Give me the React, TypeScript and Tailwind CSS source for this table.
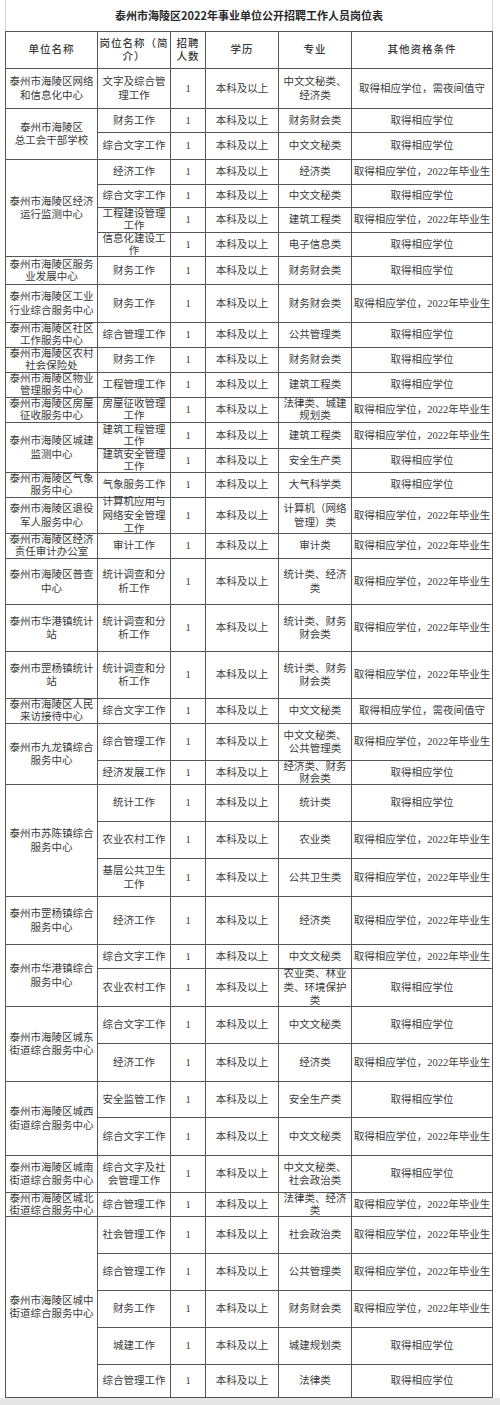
import React from "react";

type Row = [string, string, string];
type Group = { u: string; rows: Row[] };

const groups: Group[] = [
  { u: "泰州市海陵区网络\n和信息化中心", rows: [["文字及综合管\n理工作", "中文文秘类、\n经济类", "取得相应学位，需夜间值守"]] },
  { u: "泰州市海陵区\n总工会干部学校", rows: [["财务工作", "财务财会类", "取得相应学位"], ["综合文字工作", "中文文秘类", "取得相应学位"]] },
  {
    u: "泰州市海陵区经济\n运行监测中心",
    rows: [
      ["经济工作", "经济类", "取得相应学位，2022年毕业生"],
      ["综合文字工作", "中文文秘类", "取得相应学位"],
      ["工程建设管理\n工作", "建筑工程类", "取得相应学位，2022年毕业生"],
      ["信息化建设工\n作", "电子信息类", "取得相应学位"],
    ],
  },
  { u: "泰州市海陵区服务\n业发展中心", rows: [["财务工作", "财务财会类", "取得相应学位"]] },
  { u: "泰州市海陵区工业\n行业综合服务中心", rows: [["财务工作", "财务财会类", "取得相应学位，2022年毕业生"]] },
  { u: "泰州市海陵区社区\n工作服务中心", rows: [["综合管理工作", "公共管理类", "取得相应学位"]] },
  { u: "泰州市海陵区农村\n社会保险处", rows: [["财务工作", "财务财会类", "取得相应学位"]] },
  { u: "泰州市海陵区物业\n管理服务中心", rows: [["工程管理工作", "建筑工程类", "取得相应学位"]] },
  { u: "泰州市海陵区房屋\n征收服务中心", rows: [["房屋征收管理\n工作", "法律类、城建\n规划类", "取得相应学位，2022年毕业生"]] },
  {
    u: "泰州市海陵区城建\n监测中心",
    rows: [
      ["建筑工程管理\n工作", "建筑工程类", "取得相应学位，2022年毕业生"],
      ["建筑安全管理\n工作", "安全生产类", "取得相应学位"],
    ],
  },
  { u: "泰州市海陵区气象\n服务中心", rows: [["气象服务工作", "大气科学类", "取得相应学位"]] },
  { u: "泰州市海陵区退役\n军人服务中心", rows: [["计算机应用与\n网络安全管理\n工作", "计算机（网络\n管理）类", "取得相应学位，2022年毕业生"]] },
  { u: "泰州市海陵区经济\n责任审计办公室", rows: [["审计工作", "审计类", "取得相应学位，2022年毕业生"]] },
  { u: "泰州市海陵区普查\n中心", rows: [["统计调查和分\n析工作", "统计类、经济\n类", "取得相应学位，2022年毕业生"]] },
  { u: "泰州市华港镇统计\n站", rows: [["统计调查和分\n析工作", "统计类、财务\n财会类", "取得相应学位，2022年毕业生"]] },
  { u: "泰州市罡杨镇统计\n站", rows: [["统计调查和分\n析工作", "统计类、财务\n财会类", "取得相应学位，2022年毕业生"]] },
  { u: "泰州市海陵区人民\n来访接待中心", rows: [["综合文字工作", "中文文秘类", "取得相应学位，需夜间值守"]] },
  {
    u: "泰州市九龙镇综合\n服务中心",
    rows: [
      ["综合管理工作", "中文文秘类、\n公共管理类", "取得相应学位，2022年毕业生"],
      ["经济发展工作", "经济类、财务\n财会类", "取得相应学位"],
    ],
  },
  {
    u: "泰州市苏陈镇综合\n服务中心",
    rows: [
      ["统计工作", "统计类", "取得相应学位"],
      ["农业农村工作", "农业类", "取得相应学位，2022年毕业生"],
      ["基层公共卫生\n工作", "公共卫生类", "取得相应学位，2022年毕业生"],
    ],
  },
  { u: "泰州市罡杨镇综合\n服务中心", rows: [["经济工作", "经济类", "取得相应学位，2022年毕业生"]] },
  {
    u: "泰州市华港镇综合\n服务中心",
    rows: [
      ["综合文字工作", "中文文秘类", "取得相应学位，2022年毕业生"],
      ["农业农村工作", "农业类、林业\n类、环境保护\n类", "取得相应学位"],
    ],
  },
  {
    u: "泰州市海陵区城东\n街道综合服务中心",
    rows: [
      ["综合文字工作", "中文文秘类", "取得相应学位"],
      ["经济工作", "经济类", "取得相应学位，2022年毕业生"],
    ],
  },
  {
    u: "泰州市海陵区城西\n街道综合服务中心",
    rows: [
      ["安全监管工作", "安全生产类", "取得相应学位"],
      ["综合文字工作", "中文文秘类", "取得相应学位，2022年毕业生"],
    ],
  },
  { u: "泰州市海陵区城南\n街道综合服务中心", rows: [["综合文字及社\n会管理工作", "中文文秘类、\n社会政治类", "取得相应学位"]] },
  { u: "泰州市海陵区城北\n街道综合服务中心", rows: [["综合管理工作", "法律类、经济\n类", "取得相应学位，2022年毕业生"]] },
  {
    u: "泰州市海陵区城中\n街道综合服务中心",
    rows: [
      ["社会管理工作", "社会政治类", "取得相应学位，2022年毕业生"],
      ["综合管理工作", "公共管理类", "取得相应学位，2022年毕业生"],
      ["财务工作", "财务财会类", "取得相应学位，2022年毕业生"],
      ["城建工作", "城建规划类", "取得相应学位"],
      ["综合管理工作", "法律类", "取得相应学位"],
    ],
  },
];

const heights = [
  40, 24, 27, 25, 23, 25, 24, 28, 38, 25, 25, 25, 25, 26, 24, 25, 36, 25, 46, 47, 47, 25, 37, 24, 37, 37, 38, 48, 24,
  38, 37, 38, 36, 38, 37, 24, 37, 37, 37, 37, 33,
];

const spanClass: Record<number, string> = {
  1: "",
  2: "row-span-2",
  3: "row-span-3",
  4: "row-span-4",
  5: "row-span-5",
};

const FONT = { fontFamily: '"Liberation Serif", "Noto Sans CJK SC", serif' };

function Cell({ text, h, extra = "", nowrap = false }: { text: string; h: number; extra?: string; nowrap?: boolean }) {
  const lead = h < 30 ? "leading-[12px]" : "leading-[13.5px]";
  return (
    <div
      className={`flex flex-col items-center justify-center border-r border-b border-[#555] text-center ${lead} ${extra} ${
        nowrap ? "whitespace-nowrap" : ""
      }`}
    >
      {text.split("\n").map((l, i) => (
        <span key={i} className="block">
          {l}
        </span>
      ))}
    </div>
  );
}

export default function App() {
  const cells: React.ReactNode[] = [];
  let ri = 0;
  groups.forEach((g, gi) => {
    const n = g.rows.length;
    const total = heights.slice(ri, ri + n).reduce((a, b) => a + b, 0);
    cells.push(<Cell key={`u${gi}`} text={g.u} h={total} extra={spanClass[n]} />);
    g.rows.forEach((r, k) => {
      const h = heights[ri + k];
      cells.push(<Cell key={`p${gi}-${k}`} text={r[0]} h={h} />);
      cells.push(<Cell key={`n${gi}-${k}`} text="1" h={h} />);
      cells.push(<Cell key={`e${gi}-${k}`} text="本科及以上" h={h} />);
      cells.push(<Cell key={`m${gi}-${k}`} text={r[1]} h={h} />);
      cells.push(<Cell key={`o${gi}-${k}`} text={r[2]} h={h} nowrap />);
    });
    ri += n;
  });

  return (
    <div className="w-[500px] bg-white text-[#3a3a3a]" style={FONT}>
      <div className="pl-[5px] pr-[7px]">
        <div
          className="flex h-[31px] items-center justify-center border-x border-[#d4d4d4] text-[11px] font-bold text-[#2a2a2a]"
          style={{ fontFamily: '"Noto Sans CJK SC", sans-serif' }}
        >
          泰州市海陵区2022年事业单位公开招聘工作人员岗位表
        </div>
        <div className="grid grid-cols-[92px_73px_35px_73px_73px_141px] grid-rows-[37px_40px_24px_27px_25px_23px_25px_24px_28px_38px_25px_25px_25px_25px_26px_24px_25px_36px_25px_46px_47px_47px_25px_37px_24px_37px_37px_38px_48px_24px_38px_37px_38px_36px_38px_37px_24px_37px_37px_37px_37px_33px] border-l border-t border-[#555] text-[10.5px]">
          <Cell text="单位名称" h={38} extra="tracking-[1px] font-medium" />
          <Cell text={"岗位名称（简\n介）"} h={38} extra="tracking-[1px] font-medium" />
          <Cell text={"招聘\n人数"} h={38} extra="tracking-[1px] font-medium" />
          <Cell text="学历" h={38} extra="tracking-[1px] font-medium" />
          <Cell text="专业" h={38} extra="tracking-[1px] font-medium" />
          <Cell text="其他资格条件" h={38} extra="tracking-[1px] font-medium" />
          {cells}
        </div>
      </div>
      <div className="h-[7px] bg-[#e6e6e6]" />
    </div>
  );
}
